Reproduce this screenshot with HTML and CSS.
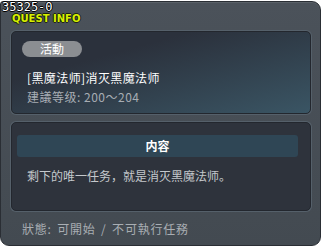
FILE: index.html
```html
<!DOCTYPE html>
<html lang="zh">
<head>
    <meta charset="UTF-8">
    <title>Quest Info</title>
    <link rel="stylesheet" href="styles.css">
</head>
<body>
    <div class="ventana">
        <div class="quest-id">35325-0</div>
        <div class="cabecera">QUEST INFO</div>

        <div class="panel panel-info">
            <div class="etiqueta">活動</div>
            <div class="titulo">[黑魔法师]消灭黑魔法师</div>
            <div class="nivel">建議等级: 200～204</div>
        </div>

        <div class="panel panel-contenido">
            <div class="barra">内容</div>
            <div class="descripcion">剩下的唯一任务，就是消灭黑魔法师。</div>
        </div>

        <div class="estado">狀態: 可開始 / 不可執行任務</div>
    </div>
</body>
</html>
```

FILE: styles.css
```css
* {
    margin: 0;
    padding: 0;
    box-sizing: border-box;
}

html, body {
    width: 322px;
    height: 248px;
    background-color: #ffffff;
    overflow: hidden;
    font-family: "Noto Sans CJK SC", "Noto Sans CJK TC", sans-serif;
}

.ventana {
    position: relative;
    margin-top: 1px;
    width: 321px;
    height: 245px;
    padding: 29px 9px 0 10px;
    background: linear-gradient(to bottom, #4b525a, #434a51);
    border: 1px solid #2a2e34;
    border-radius: 3px 9px 9px 9px;
    box-shadow: inset 0 1px 0 #5a6168;
}

.quest-id {
    position: absolute;
    left: 1px;
    top: -1px;
    font-family: "DejaVu Sans Mono", monospace;
    font-size: 12px;
    line-height: 12px;
    color: #ffffff;
    text-shadow: 1px 0 0 #000, -1px 0 0 #000, 0 1px 0 #000, 0 -1px 0 #000;
}

.cabecera {
    position: absolute;
    left: 11px;
    top: 11px;
    font-family: "DejaVu Sans", sans-serif;
    font-size: 10px;
    font-weight: bold;
    line-height: 12px;
    color: #d8f000;
    text-shadow: 1px 0 0 #1e2410, -1px 0 0 #1e2410, 0 1px 0 #1e2410, 0 -1px 0 #1e2410;
}

.panel {
    border: 1px solid #23272e;
    border-radius: 5px;
    box-shadow: 0 0 0 1px #55606a;
}

.panel-info {
    height: 83px;
    padding: 9px 0 0 10px;
    background: linear-gradient(to bottom right, #2b313c 30%, #3a5564 100%);
}

.etiqueta {
    width: 60px;
    height: 16px;
    line-height: 16px;
    border-radius: 8px;
    background-color: #8b8e92;
    color: #ffffff;
    font-size: 12px;
    text-align: center;
}

.titulo {
    margin: 12px 0 0 5px;
    font-size: 12px;
    line-height: 18px;
    letter-spacing: 0.4px;
    color: #ffffff;
}

.nivel {
    margin: 1px 0 0 5px;
    font-size: 12px;
    line-height: 17px;
    letter-spacing: 0.5px;
    color: #a7adb4;
}

.panel-contenido {
    height: 89px;
    margin-top: 8px;
    padding: 12px 12px 0 5px;
    background-color: #2e333c;
}

.barra {
    height: 22px;
    line-height: 22px;
    border-radius: 3px;
    background-color: #2f4655;
    color: #ffffff;
    font-size: 12px;
    font-weight: bold;
    text-align: center;
}

.descripcion {
    margin: 10px 0 0 10px;
    font-size: 12px;
    line-height: 17px;
    color: #c4c8cc;
}

.estado {
    margin: 9px 0 0 11px;
    font-size: 12px;
    line-height: 17px;
    letter-spacing: 0.8px;
    word-spacing: 2px;
    color: #a9aeb3;
}
```
